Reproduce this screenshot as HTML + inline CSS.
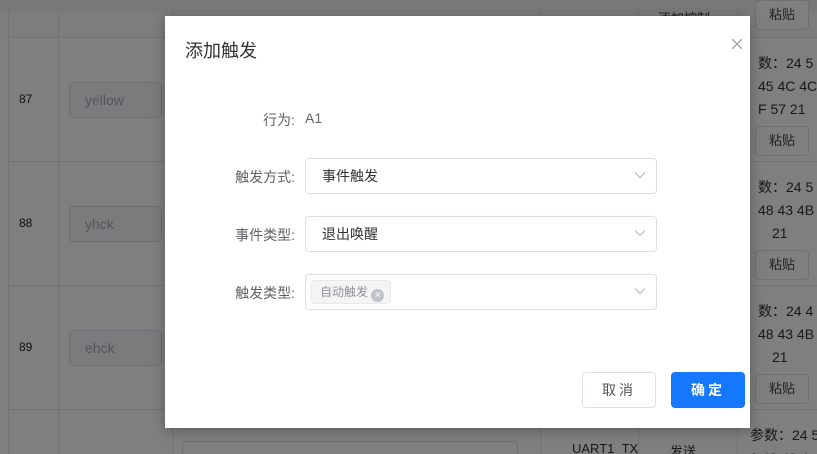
<!DOCTYPE html>
<html><head><meta charset="utf-8"><style>
*{box-sizing:border-box;margin:0;padding:0}
html,body{width:817px;height:454px;overflow:hidden}
body{position:relative;background:#fff;font-family:"Liberation Sans","Noto Sans CJK SC",sans-serif;font-size:14px;color:#333}
.a{position:absolute}
.vl{position:absolute;width:1px;background:#e4e4e4}
.hl{position:absolute;height:1px;background:#e4e4e4}
.inp{position:absolute;width:93px;height:36px;border:1px solid #dcdfe6;border-radius:4px;background:#f5f7fa;color:#a8abb2;font-size:14px;line-height:34px;padding-left:15px}
.btn{position:absolute;border:1px solid #dcdfe6;border-radius:4px;background:#fff;font-size:13px;color:#444;text-align:center}
.num{position:absolute;left:19px;font-size:12px;color:#222}
.hex{position:absolute;left:758px;font-size:14px;color:#333;line-height:23px;white-space:nowrap}
.ov{position:absolute;left:0;top:0;width:817px;height:454px;background:rgba(0,0,0,.5)}
.modal{position:absolute;left:165px;top:16px;width:585px;height:412px;background:#fff;box-shadow:0 2px 12px rgba(0,0,0,.3)}
.lbl{position:absolute;right:455px;font-size:14px;color:#606266;text-align:right;white-space:nowrap}
.sel{position:absolute;left:140px;width:352px;height:36px;border:1px solid #dcdfe6;border-radius:4px;font-size:14px;color:#333;line-height:34px;padding-left:16px}
.sel svg{position:absolute;right:10px;top:12px}
#clip{position:absolute;left:0;top:0;width:817px;height:454px;overflow:hidden}
</style></head><body><div id="clip">
<div class="a" style="left:0;top:0;width:817px;height:12px;background:#f2f2f2"></div>
<div class="a" style="left:0;top:12px;width:817px;height:25px;background:#fafafa"></div>
<div class="vl" style="left:8px;top:12px;height:442px"></div>
<div class="vl" style="left:58px;top:12px;height:442px"></div>
<div class="vl" style="left:172px;top:12px;height:442px"></div>
<div class="vl" style="left:540px;top:12px;height:442px"></div>
<div class="vl" style="left:638px;top:12px;height:442px"></div>
<div class="vl" style="left:737px;top:12px;height:442px"></div>
<div class="hl" style="left:8px;top:37px;width:809px"></div>
<div class="hl" style="left:8px;top:161px;width:809px"></div>
<div class="hl" style="left:8px;top:285px;width:809px"></div>
<div class="hl" style="left:8px;top:409px;width:809px"></div>
<div class="num" style="top:92px">87</div>
<div class="num" style="top:216px">88</div>
<div class="num" style="top:340px">89</div>
<div class="inp" style="left:69px;top:82px">yellow</div>
<div class="inp" style="left:69px;top:206px">yhck</div>
<div class="inp" style="left:69px;top:330px">ehck</div>
<div class="btn" style="left:755px;top:0;width:54px;height:30px;line-height:28px">粘贴</div>
<div class="a" style="left:658px;top:8px;font-size:13px;color:#333">添加控制</div>
<div class="hex" style="top:52px">数：24 5<br>45 4C 4C<br>F 57 21</div>
<div class="btn" style="left:755px;top:126px;width:54px;height:30px;line-height:28px">粘贴</div>
<div class="hex" style="top:176px">数：24 5<br>48 43 4B<br><span style="padding-left:14px">21</span></div>
<div class="btn" style="left:755px;top:250px;width:54px;height:30px;line-height:28px">粘贴</div>
<div class="hex" style="top:300px">数：24 4<br>48 43 4B<br><span style="padding-left:14px">21</span></div>
<div class="btn" style="left:755px;top:374px;width:54px;height:30px;line-height:28px">粘贴</div>
<div class="hex" style="left:750px;top:424px;height:30px;overflow:hidden">参数：24 5<br>2 48 43 4</div>
<div class="a" style="left:182px;top:441px;width:336px;height:13px;border:1px solid #dcdfe6;border-bottom:none;border-radius:4px 4px 0 0"></div>
<div class="a" style="left:572px;top:441px;font-size:13px;height:13px;overflow:hidden">UART1_TX</div>
<div class="a" style="left:670px;top:441px;font-size:13px;height:13px;overflow:hidden">发送</div>
<div class="ov"></div>
<div class="modal">
<div class="a" style="left:20px;top:21px;font-size:18px;color:#333">添加触发</div>
<svg class="a" style="left:567px;top:23px" width="10" height="10" viewBox="0 0 10 10"><path d="M0 0L10 10M10 0L0 10" stroke="#999" stroke-width="1.2"/></svg>
<div class="lbl" style="top:94px">行为:</div>
<div class="a" style="left:140px;top:94px;font-size:14px;color:#606266">A1</div>
<div class="lbl" style="top:151px">触发方式:</div>
<div class="sel" style="top:142px">事件触发<svg width="12" height="8" viewBox="0 0 12 8"><path d="M1 1.5L6 6.5L11 1.5" fill="none" stroke="#bbb" stroke-width="1.2"/></svg></div>
<div class="lbl" style="top:209px">事件类型:</div>
<div class="sel" style="top:200px">退出唤醒<svg width="12" height="8" viewBox="0 0 12 8"><path d="M1 1.5L6 6.5L11 1.5" fill="none" stroke="#bbb" stroke-width="1.2"/></svg></div>
<div class="lbl" style="top:267px">触发类型:</div>
<div class="sel" style="top:258px;padding-left:5px"><span style="display:inline-block;vertical-align:top;margin-top:5px;height:24px;line-height:22px;padding:0 6px 0 8px;background:#f4f4f5;border:1px solid #e9e9eb;border-radius:4px;font-size:12px;color:#909399">自动触发 <span style="display:inline-block;width:13px;height:13px;border-radius:50%;background:#c0c4cc;color:#fff;font-size:10px;line-height:13px;text-align:center;vertical-align:-2px">×</span></span><svg width="12" height="8" viewBox="0 0 12 8"><path d="M1 1.5L6 6.5L11 1.5" fill="none" stroke="#bbb" stroke-width="1.2"/></svg></div>
<div class="a" style="left:417px;top:356px;width:74px;height:36px;border:1px solid #dcdfe6;border-radius:4px;text-align:center;line-height:34px;font-size:14px;color:#555;letter-spacing:3px">取消</div>
<div class="a" style="left:506px;top:356px;width:74px;height:36px;border-radius:4px;background:#1677ff;text-align:center;line-height:36px;font-size:14px;color:#fff;font-weight:bold;letter-spacing:3px">确定</div>
</div>
</div></body></html>
